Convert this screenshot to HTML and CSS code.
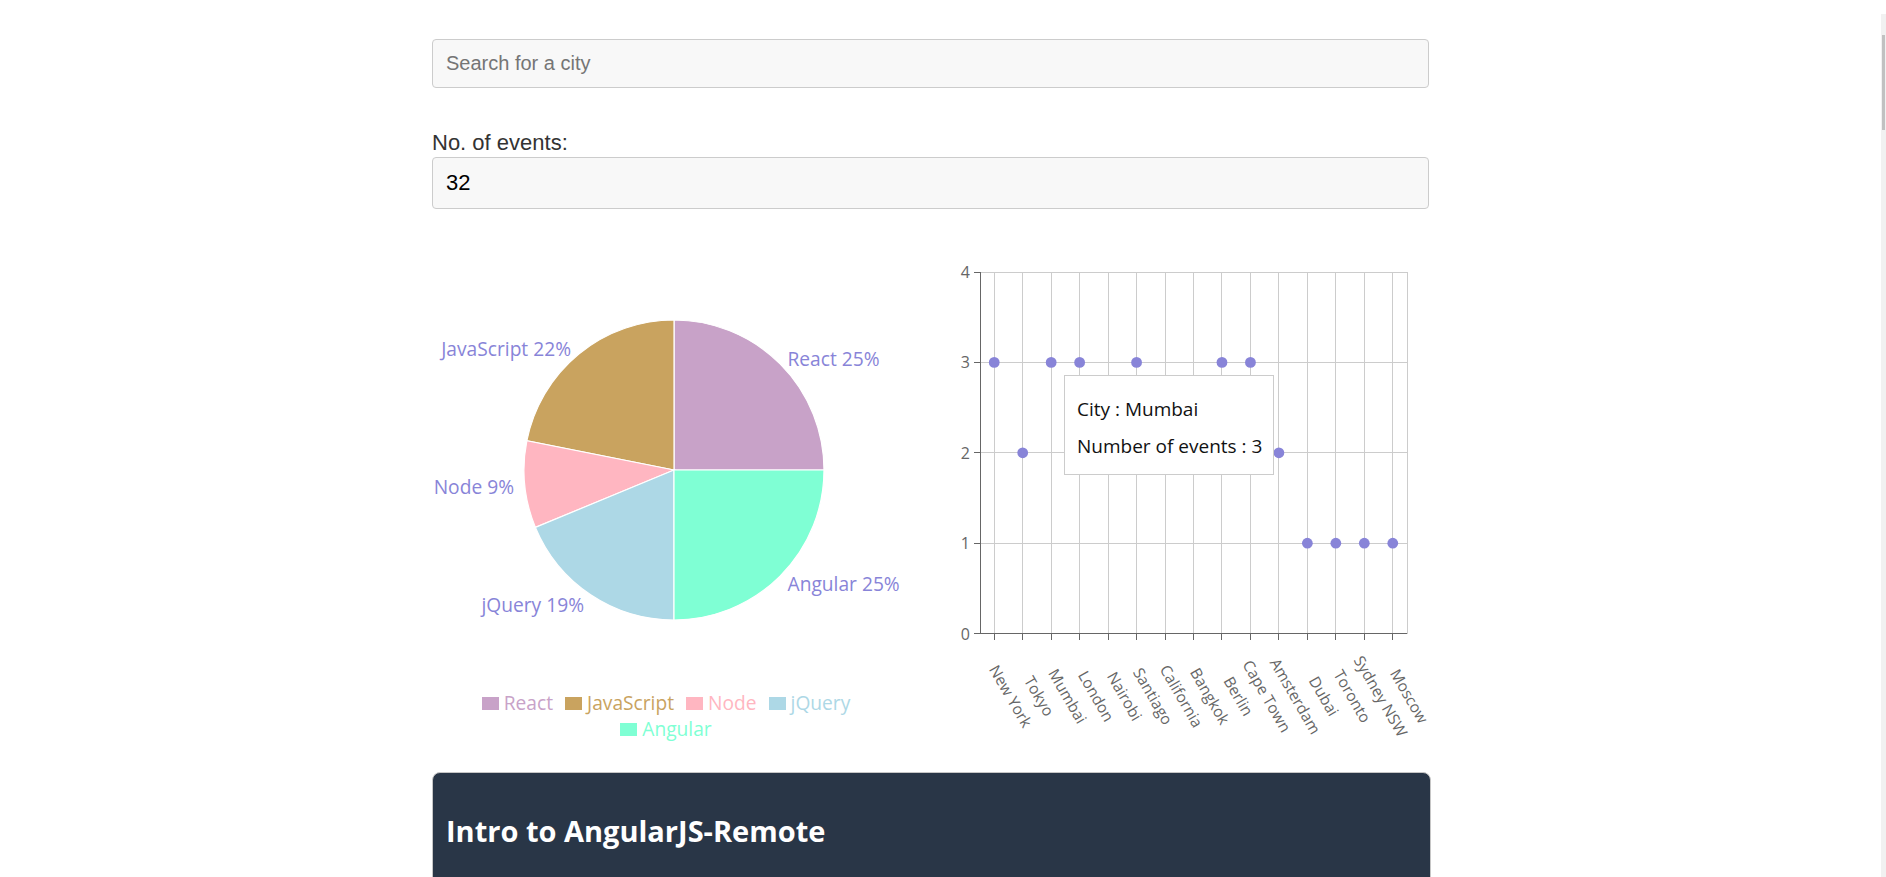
FILE: index.html
```html
<!DOCTYPE html>
<html lang="en">
<head>
<meta charset="utf-8">
<title>Meet App</title>
<link rel="stylesheet" href="styles.css">
</head>
<body>
<main class="page">
  <div class="search">
    <input class="search-input" type="text" placeholder="Search for a city">
  </div>
  <div class="events">
    <label class="field-label" for="events-count">No. of events:</label>
    <input id="events-count" class="number-input" type="text" value="32">
  </div>

  <section class="charts">
    <div class="chart pie-chart">
      <svg class="pie-svg" width="499" height="450" viewBox="0 0 499 450">
        <g class="slices" stroke="#fff" stroke-width="1.2">
          <path fill="#C8A2C8" d="M242,230 L392,230 A150,150 0 0 0 242,80 Z"/>
          <path fill="#C9A35F" d="M242,230 L242,80 A150,150 0 0 0 94.88,200.74 Z"/>
          <path fill="#FFB6C1" d="M242,230 L94.88,200.74 A150,150 0 0 0 103.42,287.4 Z"/>
          <path fill="#ADD8E6" d="M242,230 L103.42,287.4 A150,150 0 0 0 242,380 Z"/>
          <path fill="#7FFFD4" d="M242,230 L242,380 A150,150 0 0 0 392,230 Z"/>
        </g>
        <g class="pie-labels">
          <text x="355.5" y="118" text-anchor="start">React 25%</text>
          <text x="139" y="108.5" text-anchor="end">JavaScript 22%</text>
          <text x="82" y="246" text-anchor="end">Node 9%</text>
          <text x="152" y="364" text-anchor="end">jQuery 19%</text>
          <text x="355.5" y="343" text-anchor="start">Angular 25%</text>
        </g>
      </svg>
      <ul class="legend">
        <li class="legend-item c-react"><span class="swatch"></span>React</li>
        <li class="legend-item c-js"><span class="swatch"></span>JavaScript</li>
        <li class="legend-item c-node"><span class="swatch"></span>Node</li>
        <li class="legend-item c-jquery"><span class="swatch"></span>jQuery</li>
        <li class="legend-item c-angular"><span class="swatch"></span>Angular</li>
      </ul>
    </div>

    <div class="chart scatter-chart">
      <svg class="scatter-svg" width="499" height="520" viewBox="0 0 499 520">
        <g class="grid" stroke="#ccc" stroke-width="1" shape-rendering="crispEdges">
          <line x1="49" y1="32" x2="476" y2="32"/>
          <line x1="49" y1="122.4" x2="476" y2="122.4"/>
          <line x1="49" y1="212.8" x2="476" y2="212.8"/>
          <line x1="49" y1="303.2" x2="476" y2="303.2"/>
          <line x1="63.23" y1="32" x2="63.23" y2="393.6"/>
          <line x1="91.7" y1="32" x2="91.7" y2="393.6"/>
          <line x1="120.17" y1="32" x2="120.17" y2="393.6"/>
          <line x1="148.63" y1="32" x2="148.63" y2="393.6"/>
          <line x1="177.1" y1="32" x2="177.1" y2="393.6"/>
          <line x1="205.57" y1="32" x2="205.57" y2="393.6"/>
          <line x1="234.03" y1="32" x2="234.03" y2="393.6"/>
          <line x1="262.5" y1="32" x2="262.5" y2="393.6"/>
          <line x1="290.97" y1="32" x2="290.97" y2="393.6"/>
          <line x1="319.43" y1="32" x2="319.43" y2="393.6"/>
          <line x1="347.9" y1="32" x2="347.9" y2="393.6"/>
          <line x1="376.37" y1="32" x2="376.37" y2="393.6"/>
          <line x1="404.83" y1="32" x2="404.83" y2="393.6"/>
          <line x1="433.3" y1="32" x2="433.3" y2="393.6"/>
          <line x1="461.77" y1="32" x2="461.77" y2="393.6"/>
          <line x1="476" y1="32" x2="476" y2="393.6"/>
        </g>
        <g class="axis" stroke="#666" stroke-width="1" shape-rendering="crispEdges">
          <line x1="49" y1="32" x2="49" y2="393.6"/>
          <line x1="49" y1="393.6" x2="476" y2="393.6"/>
          <line x1="43" y1="32" x2="49" y2="32"/>
          <line x1="43" y1="122.4" x2="49" y2="122.4"/>
          <line x1="43" y1="212.8" x2="49" y2="212.8"/>
          <line x1="43" y1="303.2" x2="49" y2="303.2"/>
          <line x1="43" y1="393.6" x2="49" y2="393.6"/>
          <line x1="63.23" y1="393.6" x2="63.23" y2="399.6"/>
          <line x1="91.7" y1="393.6" x2="91.7" y2="399.6"/>
          <line x1="120.17" y1="393.6" x2="120.17" y2="399.6"/>
          <line x1="148.63" y1="393.6" x2="148.63" y2="399.6"/>
          <line x1="177.1" y1="393.6" x2="177.1" y2="399.6"/>
          <line x1="205.57" y1="393.6" x2="205.57" y2="399.6"/>
          <line x1="234.03" y1="393.6" x2="234.03" y2="399.6"/>
          <line x1="262.5" y1="393.6" x2="262.5" y2="399.6"/>
          <line x1="290.97" y1="393.6" x2="290.97" y2="399.6"/>
          <line x1="319.43" y1="393.6" x2="319.43" y2="399.6"/>
          <line x1="347.9" y1="393.6" x2="347.9" y2="399.6"/>
          <line x1="376.37" y1="393.6" x2="376.37" y2="399.6"/>
          <line x1="404.83" y1="393.6" x2="404.83" y2="399.6"/>
          <line x1="433.3" y1="393.6" x2="433.3" y2="399.6"/>
          <line x1="461.77" y1="393.6" x2="461.77" y2="399.6"/>
        </g>
        <g class="y-ticks" text-anchor="end">
          <text x="39" y="32">4</text>
          <text x="39" y="122.4">3</text>
          <text x="39" y="212.8">2</text>
          <text x="39" y="303.2">1</text>
          <text x="39" y="393.6">0</text>
        </g>
        <g class="x-ticks" text-anchor="middle">
          <text x="80.03" y="456" transform="rotate(60 80.03 456)">New York</text>
          <text x="108.5" y="456" transform="rotate(60 108.5 456)">Tokyo</text>
          <text x="136.97" y="456" transform="rotate(60 136.97 456)">Mumbai</text>
          <text x="165.43" y="456" transform="rotate(60 165.43 456)">London</text>
          <text x="193.9" y="456" transform="rotate(60 193.9 456)">Nairobi</text>
          <text x="222.37" y="456" transform="rotate(60 222.37 456)">Santiago</text>
          <text x="250.83" y="456" transform="rotate(60 250.83 456)">California</text>
          <text x="279.3" y="456" transform="rotate(60 279.3 456)">Bangkok</text>
          <text x="307.77" y="456" transform="rotate(60 307.77 456)">Berlin</text>
          <text x="336.23" y="456" transform="rotate(60 336.23 456)">Cape Town</text>
          <text x="364.7" y="456" transform="rotate(60 364.7 456)">Amsterdam</text>
          <text x="393.17" y="456" transform="rotate(60 393.17 456)">Dubai</text>
          <text x="421.63" y="456" transform="rotate(60 421.63 456)">Toronto</text>
          <text x="450.1" y="456" transform="rotate(60 450.1 456)">Sydney NSW</text>
          <text x="478.57" y="456" transform="rotate(60 478.57 456)">Moscow</text>
        </g>
        <g class="dots" fill="#8884d8">
          <circle cx="63.23" cy="122.4" r="5.4"/>
          <circle cx="91.7" cy="212.8" r="5.4"/>
          <circle cx="120.17" cy="122.4" r="5.4"/>
          <circle cx="148.63" cy="122.4" r="5.4"/>
          <circle cx="177.1" cy="212.8" r="5.4"/>
          <circle cx="205.57" cy="122.4" r="5.4"/>
          <circle cx="234.03" cy="212.8" r="5.4"/>
          <circle cx="262.5" cy="212.8" r="5.4"/>
          <circle cx="290.97" cy="122.4" r="5.4"/>
          <circle cx="319.43" cy="122.4" r="5.4"/>
          <circle cx="347.9" cy="212.8" r="5.4"/>
          <circle cx="376.37" cy="303.2" r="5.4"/>
          <circle cx="404.83" cy="303.2" r="5.4"/>
          <circle cx="433.3" cy="303.2" r="5.4"/>
          <circle cx="461.77" cy="303.2" r="5.4"/>
        </g>
      </svg>
      <div class="tooltip">
        <p>City : Mumbai</p>
        <p>Number of events : 3</p>
      </div>
    </div>
  </section>

  <section class="card">
    <h2 class="card-title">Intro to AngularJS-Remote</h2>
  </section>
</main>
<div class="scrollbar"><div class="scrollbar-thumb"></div></div>
</body>
</html>
```

FILE: styles.css
```css
html, body {
  margin: 0;
  padding: 0;
  background: #fff;
  overflow: hidden;
}

body {
  font-family: "Liberation Sans", Arial, sans-serif;
  color: #333;
}

.page {
  width: 999px;
  margin-left: 432px;
  padding-top: 39px;
}

.search-input,
.number-input {
  display: block;
  box-sizing: border-box;
  width: 997px;
  margin: 0;
  padding: 12px 13px;
  border: 1px solid #ccc;
  border-radius: 4px;
  background: #f8f8f8;
  font-family: "Liberation Sans", Arial, sans-serif;
  color: #000;
  outline: none;
}

.search-input {
  font-size: 20px;
  line-height: 23px;
}

.search-input::placeholder {
  color: #757575;
}

.events {
  margin-top: 42px;
}

.field-label {
  display: block;
  font-size: 22px;
  line-height: 25px;
  color: #333;
}

.number-input {
  margin-top: 2px;
  font-size: 22px;
  line-height: 26px;
}

.charts {
  display: flex;
  margin-top: 31px;
  height: 520px;
}

.chart {
  position: relative;
  width: 499px;
  flex: none;
}

.chart svg {
  display: block;
  overflow: visible;
}

.pie-labels text {
  font-family: "Open Sans", "Noto Sans", sans-serif;
  font-size: 19.2px;
  fill: #8884d8;
  dominant-baseline: central;
}

.legend {
  list-style: none;
  margin: 0 0 0 24px;
  padding: 0;
  width: 420px;
  display: flex;
  flex-wrap: wrap;
  justify-content: center;
  font-family: "Open Sans", "Noto Sans", sans-serif;
  font-size: 19.2px;
  line-height: 26px;
}

.legend-item {
  display: flex;
  align-items: center;
  margin: 0 6px;
}

.swatch {
  width: 17px;
  height: 13px;
  margin-right: 5px;
  background: currentColor;
}

.c-react { color: #C8A2C8; }
.c-js { color: #C9A35F; }
.c-node { color: #FFB6C1; }
.c-jquery { color: #ADD8E6; }
.c-angular { color: #7FFFD4; }

.y-ticks text,
.x-ticks text {
  font-family: "Open Sans", "Noto Sans", sans-serif;
  font-size: 15.5px;
  fill: #666;
  dominant-baseline: central;
}

.y-ticks text {
  font-size: 16px;
}

.tooltip {
  position: absolute;
  left: 133px;
  top: 135px;
  width: 210px;
  box-sizing: border-box;
  padding: 9px 12px 3px;
  border: 1px solid #ccc;
  background: #fff;
  font-family: "Open Sans", "Noto Sans", sans-serif;
  font-size: 19px;
  line-height: 25px;
  color: #111;
  white-space: nowrap;
}

.tooltip p {
  margin: 12px 0;
}

.card {
  box-sizing: border-box;
  width: 999px;
  margin-top: 12px;
  height: 200px;
  padding: 40px 13px;
  border: 1px solid #c6c6c6;
  border-radius: 8px;
  background: #293647;
}

.card-title {
  margin: 0;
  font-family: "Open Sans", "Noto Sans", sans-serif;
  font-weight: 700;
  font-size: 29px;
  line-height: 36px;
  color: #fff;
}

.scrollbar {
  position: fixed;
  top: 14px;
  right: 0;
  bottom: 0;
  width: 5px;
  background: #f1f1f1;
}

.scrollbar-thumb {
  position: absolute;
  top: 21px;
  left: 1px;
  width: 3px;
  height: 95px;
  background: #c1c1c1;
}
```
